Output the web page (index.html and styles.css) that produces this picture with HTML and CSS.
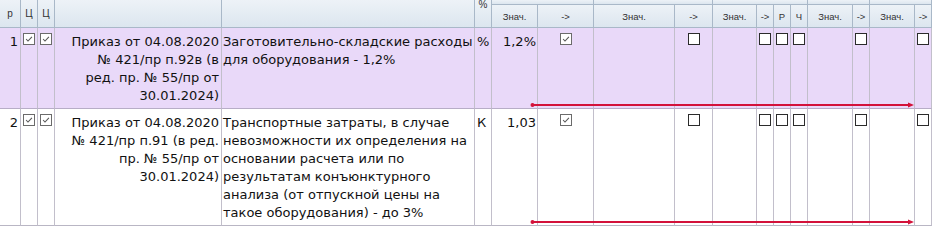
FILE: index.html
```html
<!DOCTYPE html>
<html lang="ru">
<head>
<meta charset="utf-8">
<link rel="stylesheet" href="styles.css">
</head>
<body>
<table class="grid">
  <colgroup>
    <col class="w21"><col class="w17"><col class="w17"><col class="w167"><col class="w253"><col class="w17">
    <col class="w46"><col class="w56"><col class="w81"><col class="w38"><col class="w44"><col class="w17">
    <col class="w17"><col class="w17"><col class="w45"><col class="w17"><col class="w45"><col class="w17">
  </colgroup>
  <thead>
    <tr class="grp">
      <th rowspan="2" class="hl">р</th>
      <th rowspan="2" class="hl">Ц</th>
      <th rowspan="2" class="hl">Ц</th>
      <th rowspan="2"></th>
      <th rowspan="2"></th>
      <th rowspan="2" class="pct">%</th>
      <th colspan="2"></th>
      <th colspan="2"></th>
      <th colspan="4"></th>
      <th colspan="2"></th>
      <th colspan="2"></th>
    </tr>
    <tr class="sub">
      <th>Знач.</th><th>-&gt;</th>
      <th>Знач.</th><th>-&gt;</th>
      <th>Знач.</th><th>-&gt;</th><th>Р</th><th>Ч</th>
      <th>Знач.</th><th>-&gt;</th>
      <th>Знач.</th><th>-&gt;</th>
    </tr>
  </thead>
  <tbody>
    <tr class="sel">
      <td class="num">1</td>
      <td class="cb"><span class="box on"><svg viewBox="0 0 12 12"><polyline points="2.5,6 4.8,8.4 9.5,3.5"/></svg></span></td>
      <td class="cb"><span class="box on"><svg viewBox="0 0 12 12"><polyline points="2.5,6 4.8,8.4 9.5,3.5"/></svg></span></td>
      <td class="doc">Приказ от 04.08.2020<br>№ 421/пр п.92в (в<br>ред. пр. № 55/пр от<br>30.01.2024)</td>
      <td class="desc">Заготовительно-складские расходы<br>для оборудования - 1,2%</td>
      <td class="unit">%</td>
      <td class="val">1,2%</td>
      <td class="cb link"><span class="box on"><svg viewBox="0 0 12 12"><polyline points="2.5,6 4.8,8.4 9.5,3.5"/></svg></span><svg class="arrow" viewBox="0 0 384 6"><circle cx="2.5" cy="3" r="2"/><line x1="2.5" y1="3" x2="379" y2="3"/><polygon points="378,0.5 384,3 378,5.5"/></svg></td>
      <td></td>
      <td class="cb"><span class="box"></span></td>
      <td></td>
      <td class="cb"><span class="box"></span></td>
      <td class="cb"><span class="box"></span></td>
      <td class="cb"><span class="box"></span></td>
      <td></td>
      <td class="cb"><span class="box"></span></td>
      <td></td>
      <td class="cb"><span class="box"></span></td>
    </tr>
    <tr>
      <td class="num">2</td>
      <td class="cb"><span class="box on"><svg viewBox="0 0 12 12"><polyline points="2.5,6 4.8,8.4 9.5,3.5"/></svg></span></td>
      <td class="cb"><span class="box on"><svg viewBox="0 0 12 12"><polyline points="2.5,6 4.8,8.4 9.5,3.5"/></svg></span></td>
      <td class="doc">Приказ от 04.08.2020<br>№ 421/пр п.91 (в ред.<br>пр. № 55/пр от<br>30.01.2024)</td>
      <td class="desc">Транспортные затраты, в случае<br>невозможности их определения на<br>основании расчета или по<br>результатам конъюнктурного<br>анализа (от отпускной цены на<br>такое оборудования) - до 3%</td>
      <td class="unit">К</td>
      <td class="val">1,03</td>
      <td class="cb link"><span class="box on"><svg viewBox="0 0 12 12"><polyline points="2.5,6 4.8,8.4 9.5,3.5"/></svg></span><svg class="arrow" viewBox="0 0 384 6"><circle cx="2.5" cy="3" r="2"/><line x1="2.5" y1="3" x2="379" y2="3"/><polygon points="378,0.5 384,3 378,5.5"/></svg></td>
      <td></td>
      <td class="cb"><span class="box"></span></td>
      <td></td>
      <td class="cb"><span class="box"></span></td>
      <td class="cb"><span class="box"></span></td>
      <td class="cb"><span class="box"></span></td>
      <td></td>
      <td class="cb"><span class="box"></span></td>
      <td></td>
      <td class="cb"><span class="box"></span></td>
    </tr>
  </tbody>
</table>
</body>
</html>
```
FILE: styles.css
```css
body {
  margin: 0;
  background: #ffffff;
  font-family: "DejaVu Sans", sans-serif;
  font-size: 13px;
  color: #111111;
}

.grid {
  border-collapse: separate;
  border-spacing: 0;
  table-layout: fixed;
  width: 932px;
}

.w17 { width: 17px; }
.w21 { width: 21px; }
.w38 { width: 38px; }
.w44 { width: 44px; }
.w45 { width: 45px; }
.w46 { width: 46px; }
.w56 { width: 56px; }
.w81 { width: 81px; }
.w167 { width: 167px; }
.w253 { width: 253px; }

.grid th {
  padding: 0;
  background: linear-gradient(#edf2f7, #dce6ef);
  border-right: 1px solid #a9b8c8;
  border-bottom: 1px solid #a9b8c8;
  font-family: "Liberation Sans", sans-serif;
  font-weight: normal;
  color: #333333;
  text-align: center;
  overflow: hidden;
}

.grid tr.grp th {
  height: 4px;
  vertical-align: top;
}

.grid th.hl {
  font-size: 10px;
  line-height: 12px;
  padding-top: 8px;
}

.grid th.pct {
  font-size: 10px;
  line-height: 10px;
  padding-top: 0;
}

.grid tr.sub th {
  height: 22px;
  font-size: 9.5px;
  vertical-align: middle;
}

.grid td {
  padding: 5px 2px 3px 2px;
  line-height: 18px;
  vertical-align: top;
  border-right: 1px solid #c2bfcb;
  border-bottom: 1px solid #b9b6c4;
  white-space: nowrap;
  overflow: visible;
}

.grid tr.sel td {
  background: #e9d9f9;
  border-bottom-color: #b7adc7;
}

.grid td.num { text-align: right; }
.grid td.doc { text-align: right; padding-right: 2px; }
.grid td.desc { text-align: left; padding-left: 1px; }
.grid td.unit { text-align: left; padding-left: 2px; }
.grid td.val { text-align: right; padding-right: 1px; }

.grid td.cb {
  padding-left: 0;
  padding-right: 0;
  text-align: center;
}

.box {
  display: inline-block;
  box-sizing: border-box;
  width: 12px;
  height: 12px;
  border: 1px solid #2b2b2b;
  background: #ffffff;
  vertical-align: top;
}

.box.on {
  border-color: #6b6b6b;
}

.box svg {
  display: block;
  width: 10px;
  height: 10px;
}

.box svg polyline {
  fill: none;
  stroke: #555555;
  stroke-width: 1.3;
}

.grid td.link {
  position: relative;
}

.arrow {
  position: absolute;
  left: -8px;
  bottom: 0;
  width: 384px;
  height: 6px;
}

.arrow circle,
.arrow polygon {
  fill: #d3123a;
}

.arrow line {
  stroke: #d3123a;
  stroke-width: 2;
}
```
